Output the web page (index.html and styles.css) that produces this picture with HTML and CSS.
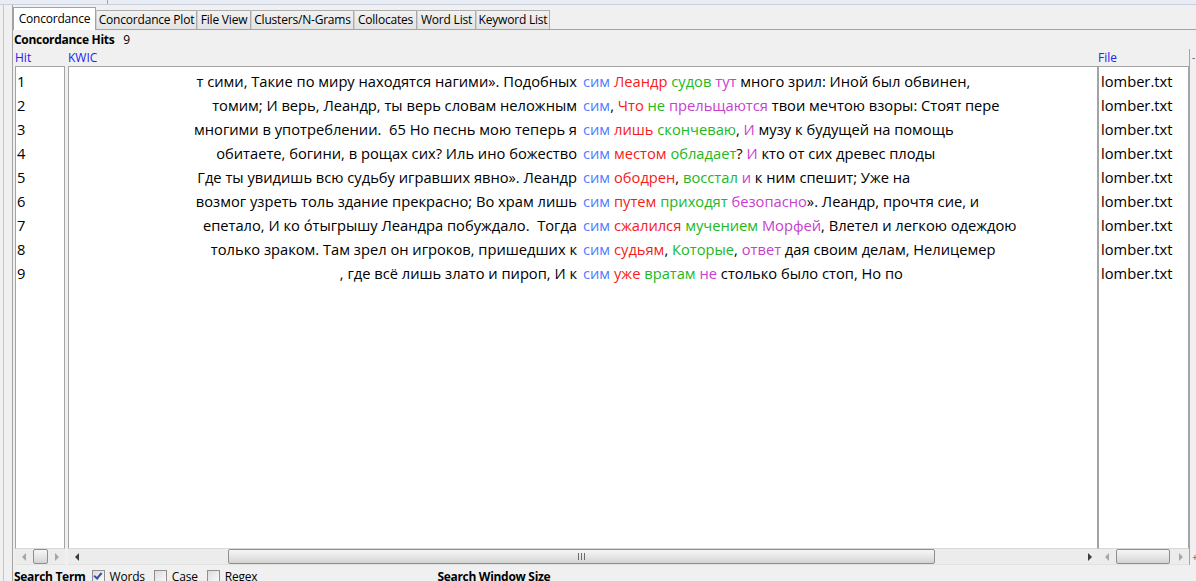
FILE: index.html
```html
<!DOCTYPE html>
<html>
<head>
<meta charset="utf-8">
<link rel="stylesheet" href="styles.css">
</head>
<body>
<div class="topstrip"><span class="tick"></span></div>
<div class="outer">
  <div class="pane">
    <div class="tabs">
      <div class="tab active w1">Concordance</div>
      <div class="tab w2">Concordance Plot</div>
      <div class="tab w3">File View</div>
      <div class="tab w4">Clusters/N-Grams</div>
      <div class="tab w5">Collocates</div>
      <div class="tab w6">Word List</div>
      <div class="tab w7">Keyword List</div>
    </div>
    <div class="content">
      <div class="hits"><b>Concordance Hits</b><span class="hitnum">9</span></div>
      <div class="table">
        <div class="col hitcol">
          <div class="head">Hit</div>
          <div class="box">
            <div class="row">1</div><div class="row">2</div><div class="row">3</div>
            <div class="row">4</div><div class="row">5</div><div class="row">6</div>
            <div class="row">7</div><div class="row">8</div><div class="row">9</div>
          </div>
          <div class="hscroll">
            <span class="btn"><i class="arr l off"></i></span>
            <span class="thumb t-hit"></span>
            <span class="track"></span>
            <span class="btn"><i class="arr r off"></i></span>
          </div>
        </div>
        <div class="col kwiccol">
          <div class="head">KWIC</div>
          <div class="box">
            <div class="krow"><span class="lc">т сими, Такие по миру находятся нагими». Подобных</span><span class="rc"><span class="b">сим</span> <span class="r">Леандр</span> <span class="g">судов</span> <span class="m">тут</span> много зрил: Иной был обвинен,</span></div>
            <div class="krow"><span class="lc">томим; И верь, Леандр, ты верь словам неложным</span><span class="rc"><span class="b">сим</span>, <span class="r">Что</span> <span class="g">не</span> <span class="m">прельщаются</span> твои мечтою взоры: Стоят пере</span></div>
            <div class="krow"><span class="lc">многими в употреблении.  65 Но песнь мою теперь я</span><span class="rc"><span class="b">сим</span> <span class="r">лишь</span> <span class="g">скончеваю</span>, <span class="m">И</span> музу к будущей на помощь</span></div>
            <div class="krow"><span class="lc">обитаете, богини, в рощах сих? Иль ино божество</span><span class="rc"><span class="b">сим</span> <span class="r">местом</span> <span class="g">обладает</span>? <span class="m">И</span> кто от сих древес плоды</span></div>
            <div class="krow"><span class="lc">Где ты увидишь всю судьбу игравших явно». Леандр</span><span class="rc"><span class="b">сим</span> <span class="r">ободрен</span>, <span class="g">восстал</span> <span class="m">и</span> к ним спешит; Уже на</span></div>
            <div class="krow"><span class="lc">возмог узреть толь здание прекрасно; Во храм лишь</span><span class="rc"><span class="b">сим</span> <span class="r">путем</span> <span class="g">приходят</span> <span class="m">безопасно</span>». Леандр, прочтя сие, и</span></div>
            <div class="krow"><span class="lc">епетало, И ко о́тыгрышу Леандра побуждало.  Тогда</span><span class="rc"><span class="b">сим</span> <span class="r">сжалился</span> <span class="g">мучением</span> <span class="m">Морфей</span>, Влетел и легкою одеждою</span></div>
            <div class="krow"><span class="lc">только зраком. Там зрел он игроков, пришедших к</span><span class="rc"><span class="b">сим</span> <span class="r">судьям</span>, <span class="g">Которые</span>, <span class="m">ответ</span> дая своим делам, Нелицемер</span></div>
            <div class="krow"><span class="lc">, где всё лишь злато и пироп, И к</span><span class="rc"><span class="b">сим</span> <span class="r">уже</span> <span class="g">вратам</span> <span class="m">не</span> столько было стоп, Но по</span></div>
          </div>
          <div class="hscroll">
            <span class="btn"><i class="arr l"></i></span>
            <span class="thumb t-kwic"><span class="grip"></span></span>
            <span class="track"></span>
            <span class="btn"><i class="arr r"></i></span>
          </div>
        </div>
        <div class="col filecol">
          <div class="head">File</div>
          <div class="box">
            <div class="frow">lomber.txt</div><div class="frow">lomber.txt</div><div class="frow">lomber.txt</div>
            <div class="frow">lomber.txt</div><div class="frow">lomber.txt</div><div class="frow">lomber.txt</div>
            <div class="frow">lomber.txt</div><div class="frow">lomber.txt</div><div class="frow">lomber.txt</div>
          </div>
          <div class="hscroll">
            <span class="btn"><i class="arr l off"></i></span>
            <span class="thumb t-file"></span>
            <span class="track"></span>
            <span class="btn"><i class="arr r off"></i></span>
          </div>
        </div>
        <div class="stub">
          <div class="stubhead">-</div>
          <div class="stubbody"></div>
          <div class="stubfoot">+</div>
        </div>
      </div>
      <div class="bottom">
        <b class="lbl">Search Term</b>
        <span class="cb cb1 checked"></span><span class="cbl">Words</span>
        <span class="cb"></span><span class="cbl">Case</span>
        <span class="cb"></span><span class="cbl">Regex</span>
        <b class="lbl swin">Search Window Size</b>
      </div>
    </div>
  </div>
</div>
</body>
</html>
```
FILE: styles.css
```css
* { box-sizing: border-box; }
html, body { margin: 0; padding: 0; }
body {
  width: 1196px;
  height: 581px;
  overflow: hidden;
  background: #f0f0f0;
  font-family: "Open Sans", "Noto Sans", sans-serif;
  font-size: 12px;
  color: #000;
}
.topstrip {
  display: flex;
  height: 5px;
  background: #e8edf5;
  border-bottom: 1px solid #c8d0e0;
}
.tick {
  margin-left: 107px;
  width: 1px;
  height: 4px;
  background: #9aa3b5;
}
.outer {
  margin-left: 3px;
  border-left: 1px solid #c6c6c6;
  padding-left: 8px;
  height: 576px;
}
.pane {
  border-left: 1px solid #a3a3a3;
  height: 100%;
}
.tabs {
  display: flex;
  align-items: flex-end;
  height: 25px;
  border-bottom: 1px solid #a3a3a3;
}
.tab {
  height: 19px;
  border: 1px solid #acacac;
  border-bottom: none;
  border-left-color: #d0d0d0;
  background: linear-gradient(#f2f2f2, #e3e3e3);
  text-align: center;
  line-height: 18px;
  font-size: 12px;
  color: #000;
  white-space: nowrap;
  letter-spacing: -0.2px;
}
.tab.active {
  height: 23px;
  margin-bottom: -1px;
  background: #fff;
  border-color: #a3a3a3;
  line-height: 21px;
}
.w1 { width: 83px; }
.w2 { width: 101px; }
.w3 { width: 54px; }
.w4 { width: 103px; }
.w5 { width: 63px; }
.w6 { width: 59px; }
.w7 { width: 74px; }

.content { padding-left: 1px; }
.hits {
  height: 19px;
  padding-top: 2px;
  line-height: 16px;
  font-size: 12px;
}
.hits b { letter-spacing: -0.3px; }
.hitnum { margin-left: 9px; }

.table { display: flex; height: 516px; }
.col { display: flex; flex-direction: column; }
.hitcol { width: 50px; margin-left: 1px; }
.kwiccol { width: 1030px; margin-left: 3px; }
.filecol { width: 91px; }
.head {
  height: 17px;
  line-height: 17px;
  color: #2323f0;
  font-size: 12px;
}
.box {
  height: 483px;
  background: #fff;
  border: 1px solid #a4a4a4;
  border-bottom-color: #d8d8d8;
  padding-top: 2px;
  overflow: hidden;
}
.row, .frow, .krow {
  height: 24px;
  line-height: 24px;
  font-size: 14.7px;
  white-space: pre;
}
.row { padding-left: 1px; }
.frow { padding-left: 2px; }
.krow { display: flex; }
.lc {
  width: 508px;
  flex: none;
  text-align: right;
  overflow: hidden;
}
.rc { margin-left: 6px; }
.b { color: #4f7cff; }
.r { color: #f41c1c; }
.g { color: #22b822; }
.m { color: #c740cf; }

.hscroll {
  height: 16px;
  display: flex;
  align-items: center;
  background: #ececec;
  border-bottom: 1px solid #e2e2e2;
}
.btn {
  width: 17px;
  height: 16px;
  flex: none;
  display: flex;
  align-items: center;
  justify-content: center;
}
.track { flex: 1; }
.arr {
  width: 0;
  height: 0;
  border-top: 4px solid transparent;
  border-bottom: 4px solid transparent;
}
.arr.l { border-right: 4px solid #3c3c3c; }
.arr.r { border-left: 4px solid #3c3c3c; }
.arr.l.off { border-right-color: #a6a6a6; }
.arr.r.off { border-left-color: #a6a6a6; }
.thumb {
  height: 15px;
  flex: none;
  border: 1px solid #8e8e8e;
  border-radius: 2px;
  background: linear-gradient(#f6f6f6, #e6e6e6 50%, #d3d3d3);
  display: flex;
  align-items: center;
  justify-content: center;
}
.t-hit { width: 15px; margin-left: 1px; }
.t-kwic { width: 707px; margin-left: 143px; }
.t-file { width: 54px; margin-left: 1px; }
.grip {
  width: 7px;
  height: 7px;
  background: repeating-linear-gradient(90deg, #6a6a6a 0 1px, transparent 1px 3px);
}

.stub {
  width: 7px;
  margin-left: 0;
  border-left: 1px solid #a4a4a4;
  display: flex;
  flex-direction: column;
  font-size: 10px;
  color: #555;
}
.stubhead { height: 17px; line-height: 17px; padding-left: 2px; }
.stubbody { flex: 1; }
.stubfoot { height: 16px; line-height: 16px; padding-left: 2px; }

.bottom {
  display: flex;
  align-items: center;
  height: 20px;
  padding-top: 3px;
  font-size: 12px;
  white-space: nowrap;
  letter-spacing: -0.2px;
}
.lbl { letter-spacing: -0.3px; }
.cb {
  width: 13px;
  height: 13px;
  border: 1px solid #8f8f8f;
  background: linear-gradient(135deg, #dcdcdc, #fbfbfb);
  margin-left: 7px;
  display: flex;
  align-items: center;
  justify-content: center;
}
.cb1 { margin-left: 6px; }
.cb.checked::after {
  content: "";
  width: 6px;
  height: 3px;
  border-left: 2px solid #3a4fa8;
  border-bottom: 2px solid #3a4fa8;
  transform: rotate(-50deg) translate(1px, -1px);
}
.cbl { margin-left: 5px; margin-right: 2px; }
.swin { margin-left: 178px; }
```
